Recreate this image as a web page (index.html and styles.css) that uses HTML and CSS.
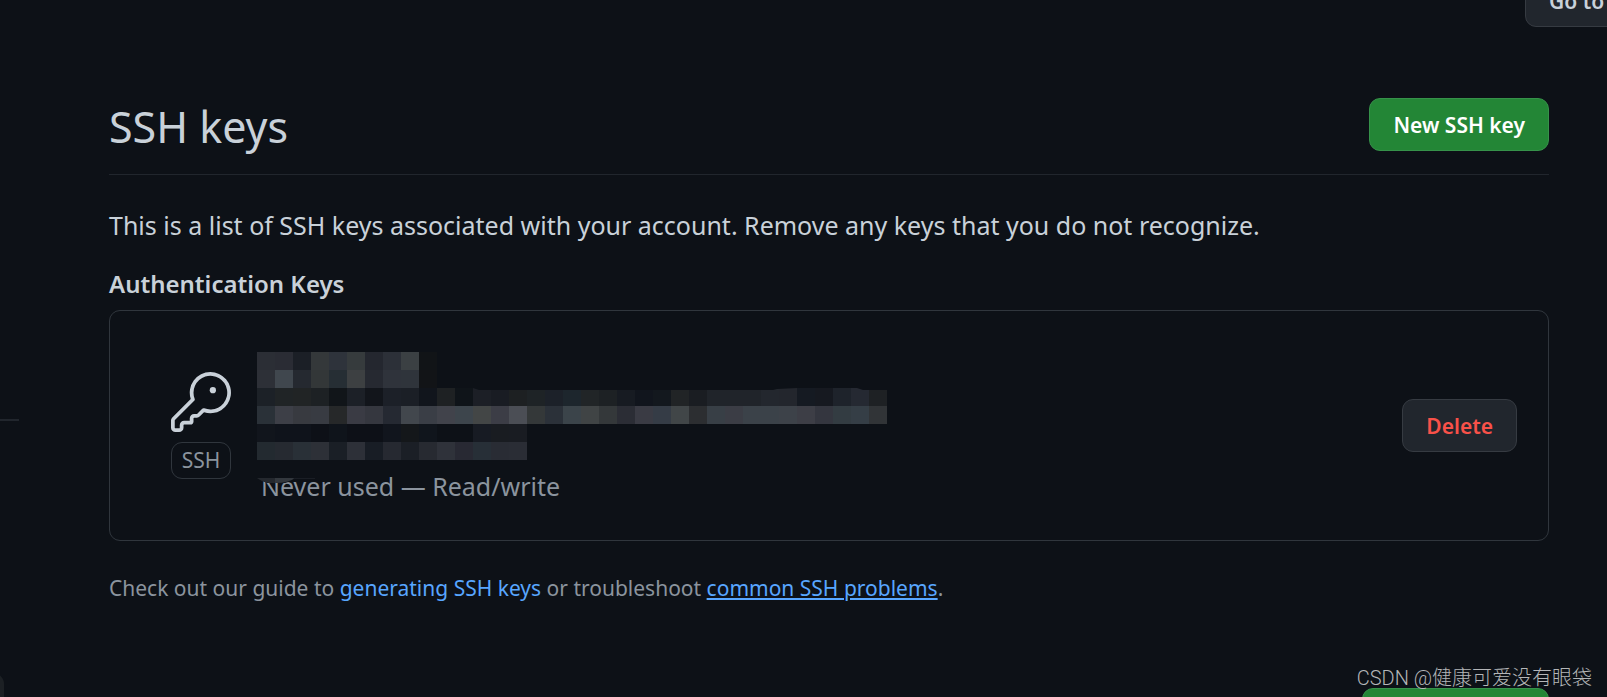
FILE: index.html
```
<!DOCTYPE html>
<html lang="en">
<head>
    <meta charset="UTF-8">
    <meta name="viewport" content="width=device-width, initial-scale=1.0">
    <title>SSH keys</title>
    <link rel="stylesheet" href="styles.css">
</head>
<body>
    <div class="page">
        <button class="btn btn-profile" type="button">Go to</button>
        <span class="nav-divider"></span>
        <span class="nav-item"></span>

        <main class="content">
            <header class="subhead">
                <h2>SSH keys</h2>
                <button class="btn btn-primary" type="button">New SSH key</button>
            </header>

            <p class="intro">This is a list of SSH keys associated with your account. Remove any keys that you do not recognize.</p>

            <h3>Authentication Keys</h3>
            <div class="key-box">
                <div class="key-type">
                    <svg class="key-icon" viewBox="0 0 24 24" aria-hidden="true">
                        <path d="M16.75 8.5a1.25 1.25 0 1 0 0-2.5 1.25 1.25 0 0 0 0 2.5Z"/>
                        <path d="M15.75 0a8.25 8.25 0 1 1-2.541 16.101l-1.636 1.636a1.744 1.744 0 0 1-1.237.513H9.25a.25.25 0 0 0-.25.25v1.448a.876.876 0 0 1-.256.619l-.214.213a.75.75 0 0 1-.545.22H5.25a.25.25 0 0 0-.25.25v1A1.75 1.75 0 0 1 3.25 24h-1.5A1.75 1.75 0 0 1 0 22.25v-2.836c0-.464.185-.908.513-1.236l7.386-7.388A8.249 8.249 0 0 1 15.75 0ZM9 8.25a6.733 6.733 0 0 0 .463 2.462.75.75 0 0 1-.168.804l-7.722 7.721a.25.25 0 0 0-.073.177v2.836c0 .138.112.25.25.25h1.5a.25.25 0 0 0 .25-.25v-1c0-.966.784-1.75 1.75-1.75H7.5v-1c0-.966.784-1.75 1.75-1.75h1.086a.25.25 0 0 0 .177-.073l1.971-1.972a.75.75 0 0 1 .804-.168A6.75 6.75 0 1 0 9 8.25Z"/>
                    </svg>
                    <span class="label">SSH</span>
                </div>
                <div class="key-info">
                    <div class="redacted" id="redacted"></div>
                    <svg class="edge" viewBox="0 0 630 4" aria-hidden="true">
                        <path fill="#0d1117" d="M216 0h324l-20 1-4 1H222ZM600 0h30v2h-24Z"/>
                    </svg>
                    <span class="key-usage">Never used — Read/write</span>
                    <svg class="smudge" viewBox="0 0 58 6" aria-hidden="true">
                        <path fill="#0d1117" d="M0 0h58v1L38 2 28 5H10Z"/>
                        <path fill="#24282e" d="M0 0h18v5h-6Q5 4 0 0Z"/>
                        <path fill="#33383e" d="M18 0h20q-6 5-20 5Z"/>
                        <path fill="#1a1e25" d="M38 0h20v1H36Z"/>
                    </svg>
                </div>
                <button class="btn btn-danger" type="button">Delete</button>
            </div>

            <p class="note">Check out our guide to <a href="#">generating SSH keys</a> or troubleshoot <a class="underlined" href="#">common SSH problems</a>.</p>
        </main>

        <button class="btn btn-primary btn-gpg" type="button" aria-label="New GPG key"></button>
        <span class="watermark">CSDN @健康可爱没有眼袋</span>
    </div>
    <script src="redacted.js"></script>
</body>
</html>
```
FILE: styles.css
```
* {
    box-sizing: border-box;
}

body {
    margin: 0;
    background: #0d1117;
    color: #c9d1d9;
    font-family: "Noto Sans", "Noto Sans CJK SC", sans-serif;
    font-size: 25px;
    line-height: 40px;
}

.page {
    position: relative;
    min-height: 100vh;
    overflow: hidden;
}

.content {
    padding: 98px 58px 0 109px;
}

.btn {
    height: 53px;
    padding: 0 23px;
    border: 1px solid #363b42;
    border-radius: 11px;
    background: #21262d;
    color: #c9d1d9;
    font-family: inherit;
    font-size: 21px;
    font-weight: 600;
    line-height: 30px;
    white-space: nowrap;
    cursor: pointer;
}

.btn-primary {
    border-color: #36924a;
    background: #238636;
    color: #fff;
}

.btn-danger {
    margin-left: auto;
    color: #f85149;
}

/* neighbours cut off by the edges of the view */
.btn-profile {
    position: absolute;
    top: -26px;
    left: calc(100% - 82px);
    width: 240px;
    text-align: left;
}

.btn-gpg {
    position: absolute;
    top: calc(100% - 9px);
    right: 58px;
    width: 187px;
}

.nav-divider {
    position: absolute;
    top: 419px;
    left: 0;
    width: 19px;
    height: 2px;
    background: #21262d;
}

.nav-item {
    position: absolute;
    bottom: -20px;
    left: -20px;
    width: 24px;
    height: 44px;
    border-radius: 11px;
    background: #1c2024;
}

.subhead {
    display: flex;
    justify-content: space-between;
    align-items: flex-start;
    height: 77px;
    border-bottom: 1px solid #21262d;
}

h2 {
    margin: 0;
    font-size: 43px;
    font-weight: 400;
    line-height: 58px;
}

.intro {
    margin: 30px 0 19px;
}

h3 {
    margin: 0 0 6px;
    font-size: 24px;
    font-weight: 600;
    line-height: 40px;
}

.key-box {
    display: flex;
    align-items: center;
    min-height: 231px;
    padding: 30px 31px 30px 61px;
    border: 1px solid #30363d;
    border-radius: 11px;
}

.key-type {
    display: flex;
    flex-direction: column;
    gap: 10px;
    width: 60px;
}

.key-icon {
    width: 60px;
    height: 60px;
    fill: #c9d1d9;
}

.label {
    border: 1px solid #30363d;
    border-radius: 11px;
    color: #8b949e;
    font-size: 21px;
    line-height: 35px;
    text-align: center;
}

.key-info {
    position: relative;
    margin-left: 26px;
    padding-top: 6px;
}

.redacted {
    display: grid;
    grid-template-columns: repeat(35, 18px);
    grid-auto-rows: 18px;
}

/* uneven top edge of the third row */
.edge {
    position: absolute;
    top: 42px;
    left: 0;
    width: 630px;
    height: 4px;
}

.key-usage {
    display: block;
    margin: 6px 0 0 4px;
    color: #8b949e;
}

/* tail of the redaction, lies over the top of the usage text */
.smudge {
    position: absolute;
    bottom: 22px;
    left: 0;
    width: 58px;
    height: 6px;
}

.note {
    margin: 27px 0 0;
    color: #8b949e;
    font-size: 21px;
}

a {
    color: #58a6ff;
    text-decoration: none;
}

.underlined {
    text-decoration: underline;
}

.watermark {
    position: absolute;
    right: 15px;
    bottom: 4px;
    color: #b4b6b8;
    font-family: Roboto, "Noto Sans CJK SC", sans-serif;
    font-size: 20px;
    font-weight: 300;
    line-height: 30px;
}
```
FILE: redacted.js
```
// One string per row of 18px blocks, colours separated by spaces, "-" leaves a gap
const rows = [
    '2b2e35 2a2c34 1b1f26 34383a 2e333b 363b3d 24272f 2c3038 3b4043 111417',
    '2d3037 40474e 252930 333738 262e34 3d4042 262931 2f333b 2f343b 121417',
    '1c2127 202426 212425 1d2124 111519 1c2027 12151b 1c2028 1b1f26 11151c 1e2123 0f1419 1c1f26 191c23 1d2022 1e2326 1c2129 1d262d 212527 1d2124 171b22 11151d 13181e 212426 1a1d22 20242a 20242a 20242a 23272e 23262d 151a22 161920 1e232b 252932 1e2124',
    '2a3138 3d3f47 383a40 383b42 262829 3a3b44 35373f 252932 42474d 3a3e46 41434b 3d454c 434646 3c3d46 4b4e55 343839 2b3139 3b444a 404445 34383a 2b2d35 3a3b44 353c46 414648 2c2e31 383f46 3b3d45 3b4249 3b4249 3d4249 3d3e46 34363f 333c42 353e46 313437',
    '11151c 0f131b 0f131b 0d1017 0f141b 0d1017 0d1017 11151d 14171a 10151c - - 171b23 191c21 191c22',
    '232a30 262a31 293037 2d3037 1a1f26 2d3038 181d25 262931 1b1f26 272a31 2f323a 282933 272f37 292c34 2a2d35'
];

const box = document.getElementById('redacted');

rows.forEach((row, y) => {
    row.split(' ').forEach((color, x) => {
        if (color === '-') return;
        const cell = document.createElement('span');
        cell.style.gridArea = `${y + 1} / ${x + 1}`;
        cell.style.background = '#' + color;
        box.appendChild(cell);
    });
});
```
